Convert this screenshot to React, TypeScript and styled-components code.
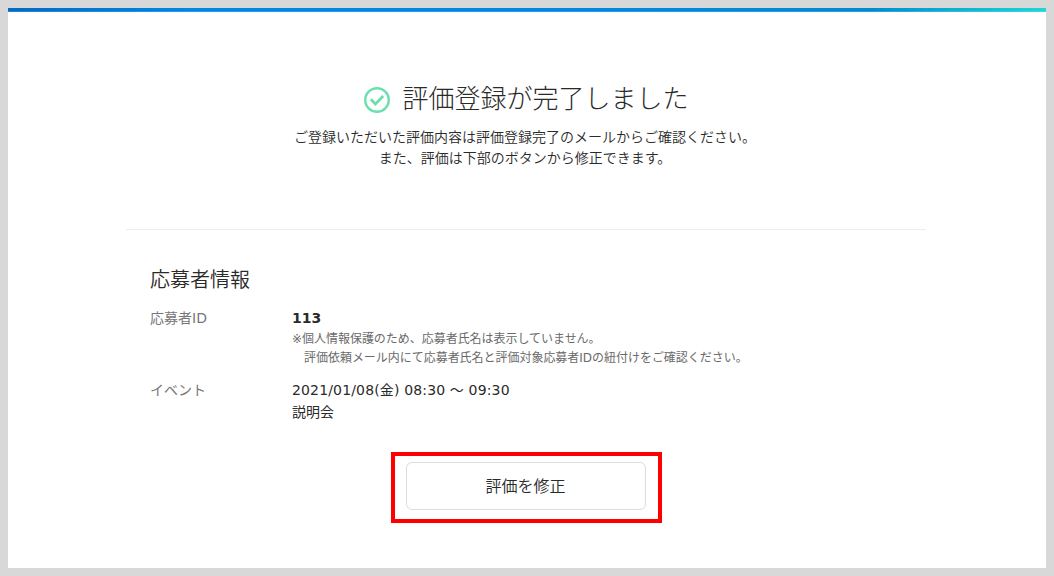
import styled, { createGlobalStyle } from 'styled-components';

const GlobalStyle = createGlobalStyle`
  *,
  *::before,
  *::after {
    box-sizing: border-box;
  }

  body {
    margin: 0;
    background-color: #d8d8d8;
    color: #2a2a2a;
    font-family: 'DejaVu Sans', 'Noto Sans CJK JP', sans-serif;
  }
`;

const StyledPage = styled.div`
  height: 576px;
  padding: 8px;
`;

const StyledSheet = styled.div`
  height: 100%;
  background-color: #fff;
`;

const StyledTopBar = styled.div`
  width: 100%;
  height: 4px;
  background: linear-gradient(
    90deg,
    #006bc4 0%,
    #0088e6 18%,
    #0088e6 50%,
    #008cd0 83%,
    #1cd6d6 100%
  );
  box-shadow: inset 0 -1px 0 rgba(255, 255, 255, 0.15);
`;

const StyledContent = styled.main`
  display: flex;
  flex-direction: column;
  align-items: center;
  padding: 67px 2px 0 0;
`;

const StyledHeading = styled.div`
  display: flex;
  align-items: center;
  gap: 12px;
  height: 40px;
  padding-left: 1px;
`;

const StyledCheckIcon = styled.svg`
  display: block;
  width: 26px;
  height: 26px;
  margin-top: 2px;
`;

const StyledTitle = styled.h1`
  margin: 0;
  font-size: 26px;
  font-weight: 300;
  line-height: 40px;
  white-space: nowrap;
`;

const StyledLead = styled.p`
  margin: 8px 0 0;
  padding-right: 2px;
  font-size: 14px;
  font-weight: 350;
  line-height: 21px;
  text-align: center;
  white-space: nowrap;
`;

const StyledSection = styled.section`
  width: 800px;
  margin-top: 60px;
  padding: 35px 24px 0;
  border-top: 1px solid #eee;
`;

const StyledSectionTitle = styled.h2`
  margin: 0 0 12px;
  font-size: 20px;
  font-weight: 350;
  line-height: 30px;
`;

const StyledRow = styled.div`
  display: grid;
  grid-template-columns: 142px 1fr;
  font-size: 14px;
  line-height: 22px;

  & + & {
    margin-top: 11px;
  }
`;

const StyledLabel = styled.div`
  color: #777;
`;

const StyledValue = styled.div<{ $bold?: boolean }>`
  font-weight: ${({ $bold }) => ($bold ? 700 : 400)};
`;

const StyledDate = styled(StyledValue)`
  letter-spacing: 0.15px;
`;

const StyledNotes = styled.div`
  margin-top: 1px;
  color: #6a6a6a;
  font-size: 12px;
  line-height: 19px;
  letter-spacing: -0.03px;
  white-space: nowrap;
`;

const StyledNote = styled.div<{ $indent?: boolean }>`
  padding-left: ${({ $indent }) => ($indent ? '12px' : '0')};
`;

const StyledHighlight = styled.div`
  width: 271px;
  height: 71px;
  margin-top: 29px;
  padding: 6px 11px;
  border: 4px solid #f00;
`;

const StyledButton = styled.button`
  width: 240px;
  height: 48px;
  padding: 0 0 2px;
  border: 1px solid #ddd;
  border-radius: 6px;
  background-color: #fff;
  color: #2a2a2a;
  font: inherit;
  font-size: 16px;
  font-weight: 350;
`;

const App = () => (
  <>
    <GlobalStyle />
    <StyledPage>
      <StyledSheet>
        <StyledTopBar />
        <StyledContent>
          <StyledHeading>
            <StyledCheckIcon viewBox="0 0 26 26" fill="none" stroke="#6be0ac">
              <circle cx="13" cy="13" r="11.8" strokeWidth="2.4" />
              <path d="M6.8 12.3l4.6 4.6 7.8-7.8" strokeWidth="2.8" />
            </StyledCheckIcon>
            <StyledTitle>評価登録が完了しました</StyledTitle>
          </StyledHeading>
          <StyledLead>
            ご登録いただいた評価内容は評価登録完了のメールからご確認ください。
            <br />
            また、評価は下部のボタンから修正できます。
          </StyledLead>
          <StyledSection>
            <StyledSectionTitle>応募者情報</StyledSectionTitle>
            <StyledRow>
              <StyledLabel>応募者ID</StyledLabel>
              <div>
                <StyledValue $bold>113</StyledValue>
                <StyledNotes>
                  <StyledNote>※個人情報保護のため、応募者氏名は表示していません。</StyledNote>
                  <StyledNote $indent>
                    評価依頼メール内にて応募者氏名と評価対象応募者IDの紐付けをご確認ください。
                  </StyledNote>
                </StyledNotes>
              </div>
            </StyledRow>
            <StyledRow>
              <StyledLabel>イベント</StyledLabel>
              <div>
                <StyledDate>2021/01/08(金) 08:30 ～ 09:30</StyledDate>
                <StyledValue>説明会</StyledValue>
              </div>
            </StyledRow>
          </StyledSection>
          <StyledHighlight>
            <StyledButton type="button">評価を修正</StyledButton>
          </StyledHighlight>
        </StyledContent>
      </StyledSheet>
    </StyledPage>
  </>
);

export default App;
